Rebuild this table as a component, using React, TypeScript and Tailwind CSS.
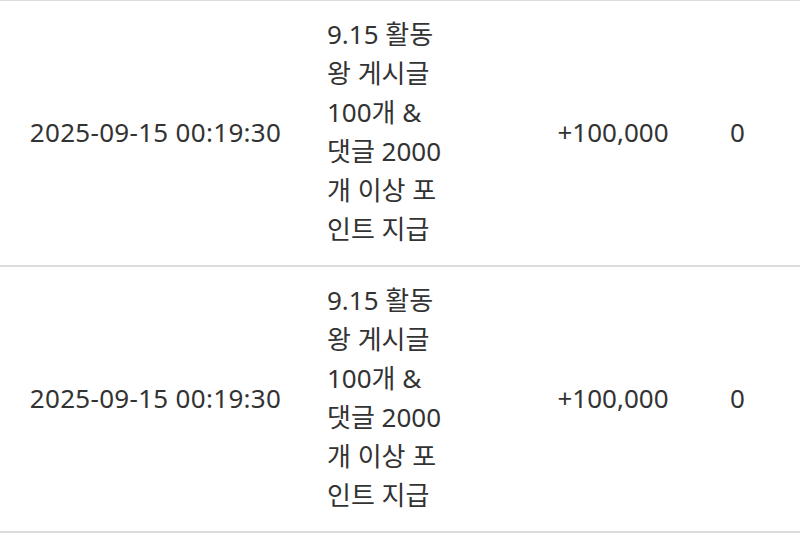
import React from 'react';

interface PointRow {
  date: string;
  amount: string;
  balance: string;
}

const rows: PointRow[] = [
  { date: '2025-09-15 00:19:30', amount: '+100,000', balance: '0' },
  { date: '2025-09-15 00:19:30', amount: '+100,000', balance: '0' },
];

// 설명 줄바꿈은 원본 화면과 같게 고정
const descLines = ['9.15 활동', '왕 게시글', '100개 &', '댓글 2000', '개 이상 포', '인트 지급'];

const App: React.FC = () => {
  return (
    <div
      className="w-[800px] bg-white text-[#333] text-[26px] leading-[39px]"
      style={{ fontFamily: '"Noto Sans", "Noto Sans CJK KR", sans-serif' }}
    >
      <div className="border-t border-[#dcdcdc]">
        {rows.map((row, i) => (
          <div key={i} className="flex items-center border-b-2 border-[#dcdcdc] pt-[14px] pb-[16px]">
            <div className="w-[311px] text-center tracking-[0.3px]">{row.date}</div>
            <div className="w-[240px] pl-4">
              <div className="w-[124px]">
                {descLines.map((line, j) => (
                  <div key={j} className="whitespace-nowrap">{line}</div>
                ))}
              </div>
            </div>
            <div className="w-[124px] text-center">{row.amount}</div>
            <div className="flex-1 text-center">{row.balance}</div>
          </div>
        ))}
      </div>
    </div>
  );
};

export default App;
